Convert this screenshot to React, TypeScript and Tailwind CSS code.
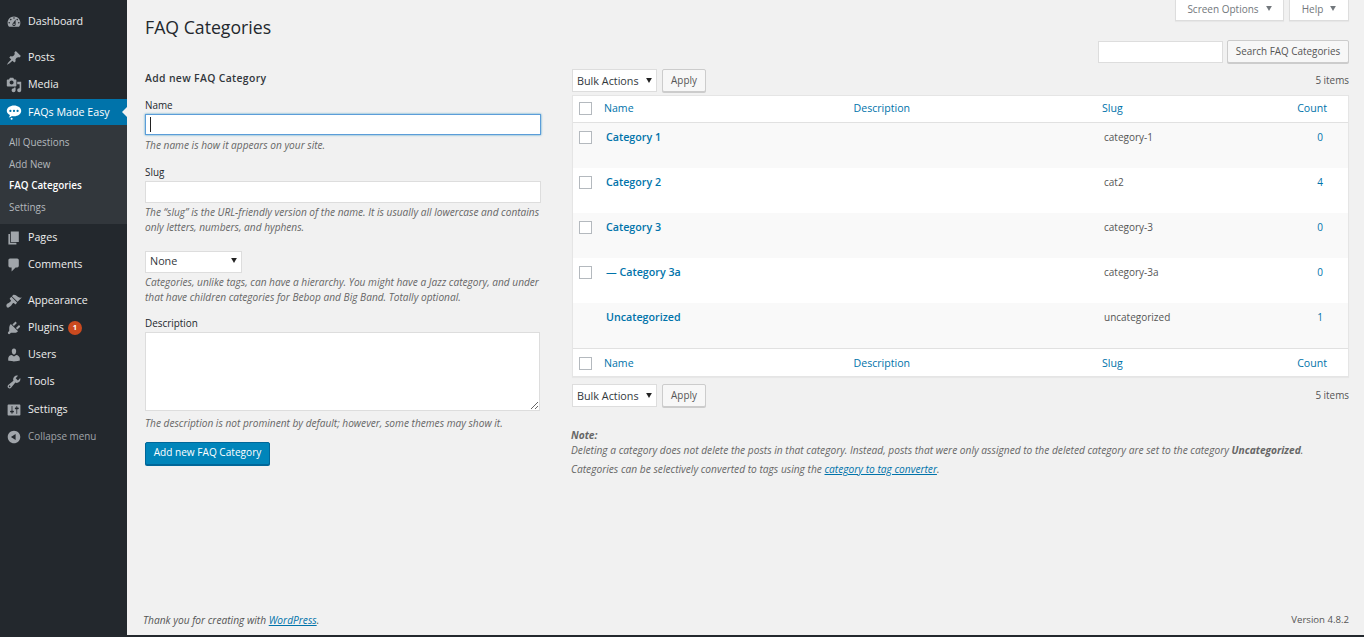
import React from "react";

const P: Record<string, string> = {
  dashboard: "M3.76 16h12.48c1.1-1.37 1.76-3.11 1.76-5 0-4.42-3.58-8-8-8s-8 3.58-8 8c0 1.89.66 3.63 1.76 5zM10 4c.55 0 1 .45 1 1s-.45 1-1 1-1-.45-1-1 .45-1 1-1zM6 6c.55 0 1 .45 1 1s-.45 1-1 1-1-.45-1-1 .45-1 1-1zm8 0c.55 0 1 .45 1 1s-.45 1-1 1-1-.45-1-1 .45-1 1-1zm-5.37 5.55L12 7v6c0 1.1-.9 2-2 2s-2-.9-2-2c0-.57.24-1.08.63-1.45zM4 10c.55 0 1 .45 1 1s-.45 1-1 1-1-.45-1-1 .45-1 1-1zm12 0c.55 0 1 .45 1 1s-.45 1-1 1-1-.45-1-1 .45-1 1-1zm-5 3c0-.55-.45-1-1-1s-1 .45-1 1 .45 1 1 1 1-.45 1-1z",
  post: "M10.44 3.02l1.82-1.82 6.36 6.35-1.83 1.82c-1.05-.68-2.48-.57-3.41.36l-.75.75c-.92.93-1.04 2.35-.35 3.41l-1.83 1.82-2.41-2.41-2.8 2.79c-.42.42-3.38 2.71-3.8 2.29s1.86-3.39 2.28-3.81l2.79-2.79L4.1 9.36l1.83-1.82c1.05.69 2.48.57 3.41-.36l.75-.75c.93-.92 1.04-2.35.35-3.41z",
  media: "M13 11V4c0-.55-.45-1-1-1h-1.67L9 1H5L3.67 3H2c-.55 0-1 .45-1 1v7c0 .55.45 1 1 1h10c.55 0 1-.45 1-1zM7 4.5c1.38 0 2.5 1.12 2.5 2.5S8.38 9.5 7 9.5 4.5 8.38 4.5 7 5.62 4.5 7 4.5zM14 6h5v10.5c0 1.38-1.12 2.5-2.5 2.5S14 17.88 14 16.5s1.12-2.5 2.5-2.5c.17 0 .34.02.5.05V9h-3V6zm-4 8.05V13h2v3.5c0 1.38-1.12 2.5-2.5 2.5S7 17.88 7 16.5 8.12 14 9.5 14c.17 0 .34.02.5.05z",
  chat: "M10 2c5 0 9 2.9 9 6.6s-4 6.6-9 6.6c-.9 0-1.8-.1-2.6-.3-.8.9-2.3 1.7-4 1.9.9-.9 1.4-2 1.5-3.1C2.6 12.5 1 10.7 1 8.6 1 4.9 5 2 10 2zM5.5 7.2a1.4 1.4 0 100 2.8 1.4 1.4 0 000-2.8zm4.500 0a1.4 1.4 0 100 2.8 1.4 1.4 0 000-2.8zm4.500 0a1.4 1.4 0 100 2.8 1.4 1.4 0 000-2.8zM7 17.2a1.3 1.3 0 110 2.6 1.3 1.3 0 010-2.6z",
  page: "M6 15V2h10v13H6zm-1 1h8v2H3V5h2v11z",
  comments: "M5 2h9c1.1 0 2 .9 2 2v7c0 1.1-.9 2-2 2h-2l-5 5v-5H5c-1.1 0-2-.9-2-2V4c0-1.1.9-2 2-2z",
  appearance: "M14.48 11.06L7.41 3.99l1.5-1.5c.5-.56 2.3-.47 3.51.32 1.21.8 1.43 1.28 2.91 2.1 1.18.64 2.45 1.26 4.45.85zm-.71.71L6.7 4.7 4.93 6.47c-.39.39-.39 1.02 0 1.41l1.06 1.06c.39.39.39 1.03 0 1.42-.6.6-1.43 1.11-2.21 1.69-.35.26-.7.53-1.01.84C1.43 13.23.4 14.9.4 15.4c0 .4.4 1.1.4 1.4s0 .8.4 1.1c.3.3 1 .4 1.4.4.5 0 2.18-1.04 3.54-2.4.31-.31.58-.66.84-1.01.58-.78 1.09-1.61 1.69-2.21.39-.39 1.03-.39 1.42 0l1.06 1.06c.39.39 1.02.39 1.41 0z",
  plugins: "M13.11 4.36L9.87 7.6 8 5.73l3.24-3.24c.35-.34 1.05-.2 1.56.32.52.51.66 1.21.31 1.55zm-8 1.77l.91-1.12 9.01 9.01-1.19.84c-.71.71-2.63 1.16-3.82 1.16H6.14L4.9 17.26c-.59.59-1.54.59-2.12 0-.59-.58-.59-1.53 0-2.12l1.24-1.24v-3.88c0-1.13.4-3.19 1.09-3.89zm7.26 3.97l3.24-3.24c.34-.35 1.04-.21 1.55.31.52.51.66 1.21.31 1.55l-3.24 3.25z",
  users: "M10 9.25c-2.27 0-2.73-3.44-2.73-3.44C7 4.02 7.82 2 9.97 2c2.16 0 2.98 2.02 2.71 3.81 0 0-.41 3.44-2.68 3.44zm0 2.57L12.72 10c2.39 0 4.52 2.33 4.52 4.53v2.49s-3.65 1.13-7.24 1.13c-3.65 0-7.24-1.13-7.24-1.13v-2.49c0-2.25 1.94-4.48 4.47-4.48z",
  tools: "M16.68 9.77c-1.34 1.34-3.3 1.67-4.95.99l-5.41 6.52c-.99.99-2.59.99-3.58 0s-.99-2.59 0-3.57l6.52-5.42c-.68-1.65-.35-3.61.99-4.95 1.28-1.28 3.12-1.62 4.72-1.06l-2.89 2.89 2.82 2.82 2.86-2.87c.53 1.58.18 3.39-1.08 4.65zM3.81 16.21c.4.39 1.04.39 1.43 0 .4-.4.4-1.04 0-1.43-.39-.4-1.03-.4-1.43 0-.39.39-.39 1.03 0 1.43z",
  settings: "M18 16V4c0-.55-.45-1-1-1H3c-.55 0-1 .45-1 1v12c0 .55.45 1 1 1h14c.55 0 1-.45 1-1zM8 11h1c.55 0 1 .45 1 1s-.45 1-1 1H8v1.5c0 .28-.22.5-.5.5s-.5-.22-.5-.5V13H6c-.55 0-1-.45-1-1s.45-1 1-1h1V5.5c0-.28.22-.5.5-.5s.5.22.5.5V11zm5-2h-1c-.55 0-1-.45-1-1s.45-1 1-1h1V5.5c0-.28.22-.5.5-.5s.5.22.5.5V7h1c.55 0 1 .45 1 1s-.45 1-1 1h-1v5.5c0 .28-.22.5-.5.5s-.5-.22-.5-.5V9z",
  collapse: "M10 2.16c4.33 0 7.84 3.51 7.84 7.84s-3.51 7.84-7.84 7.84S2.16 14.33 2.16 10 5.71 2.16 10 2.16zm2 11.72V6.12L6.18 9.97z",
};

function Icon({ n, white }: { n: string; white?: boolean }) {
  return (
    <svg viewBox="0 0 20 20" className={`w-4 h-4 shrink-0 ml-[6px] mr-[6px] ${white ? "fill-white" : "fill-[#a0a5aa]"}`}>
      <path d={P[n]} fillRule="evenodd" />
    </svg>
  );
}

function Item({ n, label, badge, cls = "" }: { n: string; label: string; badge?: string; cls?: string }) {
  return (
    <div className={`h-[27px] flex items-center text-[#eee] text-[10.7px] ${cls}`}>
      <Icon n={n} />
      <span>{label}</span>
      {badge && (
        <span className="ml-[4px] w-[14px] h-[14px] rounded-full bg-[#ca4a1f] text-white text-[7.5px] font-bold flex items-center justify-center">{badge}</span>
      )}
    </div>
  );
}

function Sub({ label, b }: { label: string; b?: boolean }) {
  return (
    <div className={`h-[21.5px] flex items-center pl-[9px] text-[9.9px] ${b ? "text-white font-semibold" : "text-[#b4b9be]"}`}>{label}</div>
  );
}

function Sidebar() {
  return (
    <aside className="w-[127px] shrink-0 h-[635px] bg-[#23282d] pt-[8px]">
      <Item n="dashboard" label="Dashboard" />
      <div className="h-[9px]" />
      <Item n="post" label="Posts" />
      <Item n="media" label="Media" />
      <div className="relative mt-[1px] h-[26px] bg-[#0073aa] flex items-center text-white text-[10.7px]">
        <Icon n="chat" white />
        <span>FAQs Made Easy</span>
        <span className="absolute right-0 top-[8px] w-0 h-0 border-y-[5px] border-y-transparent border-r-[5px] border-r-[#f1f1f1]" />
      </div>
      <div className="h-[99px] bg-[#32373c] pt-[7px]">
        <Sub label="All Questions" />
        <Sub label="Add New" />
        <Sub label="FAQ Categories" b />
        <Sub label="Settings" />
      </div>
      <Item n="page" label="Pages" />
      <Item n="comments" label="Comments" />
      <div className="h-[9px]" />
      <Item n="appearance" label="Appearance" />
      <Item n="plugins" label="Plugins" badge="1" />
      <Item n="users" label="Users" />
      <Item n="tools" label="Tools" />
      <Item n="settings" label="Settings" cls="mt-[1px]" />
      <div className="h-[27px] flex items-center text-[#a0a5aa] text-[9.9px]">
        <Icon n="collapse" />
        <span>Collapse menu</span>
      </div>
    </aside>
  );
}

const Arrow = ({ grey }: { grey?: boolean }) => (
  <svg viewBox="0 0 8 7" className={`w-[6px] h-[5px] shrink-0 mb-[2px] ${grey ? "fill-[#72777c]" : "fill-[#222]"}`}><path d="M0 0h8L4 7z" /></svg>
);

const Help = ({ children, cls = "" }: { children: React.ReactNode; cls?: string }) => (
  <p className={`italic text-[10.15px] leading-[15px] text-[#666] ${cls}`}>{children}</p>
);

const Label = ({ children, cls = "" }: { children: React.ReactNode; cls?: string }) => (
  <label className={`block text-[9.9px] leading-[14px] text-[#23282d] ${cls}`}>{children}</label>
);

function Select({ label, w, h, cls = "" }: { label: string; w: string; h: string; cls?: string }) {
  return (
    <div className={`${w} ${h} bg-white border border-[#ddd] flex items-center justify-between pl-[4px] pr-[4px] text-[10.8px] text-[#32373c] ${cls}`}>
      <span>{label}</span>
      <Arrow />
    </div>
  );
}

function BtnSecondary({ label, w }: { label: string; w: string }) {
  return (
    <button className={`${w} h-[23px] rounded-[2px] bg-[#f7f7f7] border border-[#ccc] shadow-[0_1px_0_#ccc] text-[9.9px] text-[#555] flex items-center justify-center`}>{label}</button>
  );
}

function Form() {
  return (
    <div className="w-[400px] shrink-0">
      <h2 className="text-[10.4px] font-semibold leading-[14px] text-[#32373c] tracking-[0.35px] mt-[2px]">Add new FAQ Category</h2>
      <Label cls="mt-[13px]">Name</Label>
      <div className="mt-[2px] w-[396px] h-[21px] bg-white border border-[#5b9dd9] shadow-[0_0_2px_rgba(30,140,190,0.8)] flex items-center pl-[4px]">
        <span className="w-px h-[15px] bg-[#222]" />
      </div>
      <Help cls="mt-[3px]">The name is how it appears on your site.</Help>
      <Label cls="mt-[12px]">Slug</Label>
      <input className="block mt-[2px] w-[396px] h-[22px] bg-white border border-[#ddd] outline-none" />
      <Help cls="mt-[2px]">The “slug” is the URL-friendly version of the name. It is usually all lowercase and contains only letters, numbers, and hyphens.</Help>
      <div className="mt-[16px]"><Select label="None" w="w-[97px]" h="h-[22px]" cls="pb-[2px]" /></div>
      <Help cls="mt-[2px]">Categories, unlike tags, can have a hierarchy. You might have a Jazz category, and under that have children categories for Bebop and Big Band. Totally optional.</Help>
      <Label cls="mt-[11px]">Description</Label>
      <textarea className="block mt-[2px] w-[395px] h-[79px] bg-white border border-[#ddd] outline-none" />
      <Help cls="mt-[5px]">The description is not prominent by default; however, some themes may show it.</Help>
      <button className="block mt-[11px] w-[125px] h-[23px] rounded-[2px] bg-[#0085ba] border border-[#006799] shadow-[0_1px_0_#006799] text-white text-[10.1px] pb-[1px]">Add new FAQ Category</button>
    </div>
  );
}

const GRID = "grid grid-cols-[24px_250px_249px_178px_76px]";
const Cb = () => <span className="w-[13px] h-[13px] ml-[6px] block bg-white border border-[#b4b9be]" />;

function HeaderRow({ cls }: { cls: string }) {
  return (
    <div className={`${GRID} items-center text-[#0073aa] text-[10.6px] bg-white ${cls}`}>
      <Cb />
      <span className="pl-[7px]">Name</span>
      <span className="pl-[6.5px]">Description</span>
      <span className="pl-[6px]">Slug</span>
      <span className="text-right pr-[23px]">Count</span>
    </div>
  );
}

function Row({ name, slug, count, alt, nocb }: { name: string; slug: string; count: string; alt?: boolean; nocb?: boolean }) {
  return (
    <div className={`${GRID} h-[45px] pt-[7px] ${alt ? "bg-[#f9f9f9]" : "bg-white"}`}>
      <div className="pt-[1px]">{nocb ? null : <Cb />}</div>
      <span className="pl-[9px] text-[10.7px] leading-[14px] font-semibold text-[#0073aa]">{name}</span>
      <span />
      <span className="pl-[8px] pt-[1px] text-[10px] leading-[13px] text-[#555]">{slug}</span>
      <span className="text-right pr-[27px] pt-[1px] text-[10px] leading-[13px] text-[#0073aa]">{count}</span>
    </div>
  );
}

function Toolbar({ cls }: { cls: string }) {
  return (
    <div className={`flex items-center ${cls}`}>
      <Select label="Bulk Actions" w="w-[85px]" h="h-[23px]" cls="pt-[1px]" />
      <div className="ml-[5px]"><BtnSecondary label="Apply" w="w-[44px]" /></div>
      <span className="ml-auto text-[9.9px] text-[#555]">5 items</span>
    </div>
  );
}

function ListPane() {
  return (
    <div className="flex-1 min-w-0">
      <Toolbar cls="" />
      <div className="mt-[3px] border border-[#e5e5e5] shadow-[0_1px_1px_rgba(0,0,0,0.04)]">
        <HeaderRow cls="h-[27px] pb-[1px] border-b border-[#e1e1e1]" />
        <Row name="Category 1" slug="category-1" count="0" alt />
        <Row name="Category 2" slug="cat2" count="4" />
        <Row name="Category 3" slug="category-3" count="0" alt />
        <Row name="— Category 3a" slug="category-3a" count="0" />
        <Row name="Uncategorized" slug="uncategorized" count="1" alt nocb />
        <HeaderRow cls="h-[28px] pt-[2px] border-t border-[#e1e1e1]" />
      </div>
      <Toolbar cls="mt-[7px]" />
      <div className="mt-[21px] -ml-[1px] italic text-[#666] text-[10.2px] leading-[15px]">
        <p className="font-bold">Note:</p>
        <p>Deleting a category does not delete the posts in that category. Instead, posts that were only assigned to the deleted category are set to the category <b>Uncategorized</b>.</p>
        <p className="mt-[4px]">Categories can be selectively converted to tags using the <a className="text-[#0073aa] underline">category to tag converter</a>.</p>
      </div>
    </div>
  );
}

const tab = "h-[21px] pb-[2px] bg-white border border-t-0 border-[#ddd] shadow-[0_1px_1px_rgba(0,0,0,0.04)] flex items-center justify-center gap-[7px] text-[10px] text-[#72777c]";

export default function App() {
  return (
    <div className="w-[1364px] h-[637px] overflow-hidden bg-[#f1f1f1] relative font-['Open_Sans',sans-serif]">
      <div className="flex h-[635px]">
        <Sidebar />
        <main className="flex-1 min-w-0 flex flex-col pl-[18px] pr-[15px]">
          <div className="flex justify-between h-[21px]">
            <h1 className="text-[17.7px] leading-[24px] text-[#23282d] mt-[15px] whitespace-nowrap">FAQ Categories</h1>
            <div className="flex gap-[5px]">
              <div className={`w-[109px] ${tab}`}>Screen Options <Arrow grey /></div>
              <div className={`w-[60px] ${tab}`}>Help <Arrow grey /></div>
            </div>
          </div>
          <div className="flex justify-end items-center gap-[4px] mt-[19px] h-[23px]">
            <input className="w-[125px] h-[22px] bg-white border border-[#ddd] outline-none" />
            <BtnSecondary label="Search FAQ Categories" w="w-[122px]" />
          </div>
          <div className="flex gap-[27px] mt-[6px]">
            <Form />
            <ListPane />
          </div>
          <div className="mt-auto flex justify-between items-center italic text-[10.2px] text-[#555] pb-[7px] -ml-[2px]">
            <span>Thank you for creating with <a className="text-[#0073aa] underline">WordPress</a>.</span>
            <span className="not-italic text-[9.6px]">Version 4.8.2</span>
          </div>
        </main>
      </div>
      <div className="h-[2px] bg-[#23282d]" />
    </div>
  );
}
